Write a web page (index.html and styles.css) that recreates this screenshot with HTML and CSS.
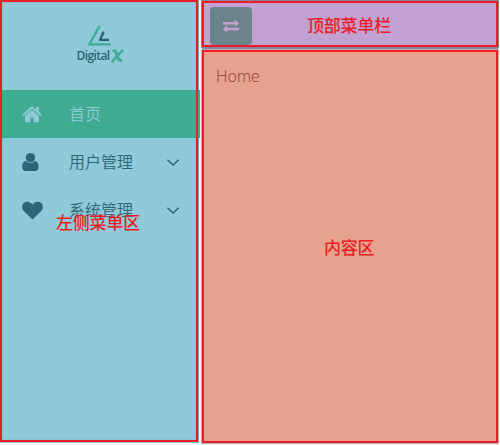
FILE: index.html
```html
<!DOCTYPE html>
<html lang="zh-CN">
<head>
<meta charset="utf-8">
<title>Digital X</title>
<link rel="stylesheet" href="styles.css">
</head>
<body>
<div class="app">
  <aside class="sidebar">
    <div class="logo">
      <svg class="mark" width="24" height="22" viewBox="0 0 24 22" fill="none" stroke-linecap="round" stroke-linejoin="round">
        <path d="M11.2 2.6 1.3 20.3H21.8" stroke="#3fac91" stroke-width="2.3"/>
        <path d="M15.3 8.5 12 15.9H20" stroke="#2b6577" stroke-width="2.4"/>
      </svg>
      <div class="wordmark"><span>Digital</span>
        <svg width="13" height="14" viewBox="0 0 13 14" fill="none" stroke="#3fac91" stroke-linecap="round" stroke-linejoin="round">
          <path d="M2.7 1.6C5 1.6 5.2 4 6 6.4S7.2 11.3 9.9 11.4" stroke-width="3"/>
          <path d="M11.5 1.4 1.2 12.6" stroke-width="2.3"/>
        </svg>
      </div>
    </div>
    <nav class="menu">
      <a class="item active">
        <svg class="icon" width="21" height="18" viewBox="0 0 21 18" fill="currentColor">
          <path d="M10 5 17 10.8V16.5Q17 17.2 16.3 17.2H11.7V12.4H8.3V17.2H3.7Q3 17.2 3 16.5V10.8Z"/>
          <path d="M.3 9.5 9 2Q10 1.2 11 2L14 4.6V2H17V7.1L19.7 9.5 18.7 10.9 10 3.7 1.3 10.9Z"/>
        </svg>
        <span>首页</span>
      </a>
      <a class="item">
        <svg class="icon" width="21" height="20" viewBox="0 0 21 20" fill="currentColor">
          <circle cx="8.4" cy="5.6" r="4.7"/>
          <path d="M4 9C1.1 9.2.3 11.8.3 15.2.3 17.7 1.7 19 3.8 19H13C15.1 19 16.5 17.7 16.5 15.2 16.5 11.8 15.7 9.2 12.8 9 10.3 11.5 6.5 11.5 4 9Z"/>
        </svg>
        <span>用户管理</span>
        <svg class="chevron" width="14" height="8" viewBox="0 0 14 8"><path d="M1.4 1.7 7 7.1 12.6 1.7"/></svg>
      </a>
      <a class="item">
        <svg class="icon" width="21" height="19" viewBox="0 0 21 19" fill="currentColor">
          <path d="M10.5 18.6 2 10.3C-1.4 6.6.3.8 5.2.8 7.8.8 9.5 2.2 10.5 3.7 11.5 2.2 13.2.8 15.8.8 20.7.8 22.4 6.6 19 10.3Z"/>
        </svg>
        <span>系统管理</span>
        <svg class="chevron" width="14" height="8" viewBox="0 0 14 8"><path d="M1.4 1.7 7 7.1 12.6 1.7"/></svg>
      </a>
    </nav>
    <div class="frame"></div>
    <strong class="note note-side">左侧菜单区</strong>
  </aside>
  <div class="main">
    <header class="topbar">
      <button class="toggle" type="button" aria-label="Toggle">
        <svg width="18" height="14" viewBox="0 0 18 14" fill="currentColor">
          <path d="M1 3H12.8V.6L17.4 4.2 12.8 7.4V5.6H1ZM17.2 8.7V11.3H5.2V13.6L.6 10 5.2 6.6V8.7Z"/>
        </svg>
      </button>
      <strong class="note note-top">顶部菜单栏</strong>
    </header>
    <main class="content">
      <p>Home</p>
      <strong class="note note-content">内容区</strong>
    </main>
  </div>
</div>
</body>
</html>
```
FILE: styles.css
```css
* { box-sizing: border-box; }
body {
  margin: 0;
  background: #f3f3f3;
  font-family: "Open Sans", "Noto Sans CJK SC", sans-serif;
}
.app {
  display: grid;
  grid-template-columns: 200px 300px;
  height: 445px;
  overflow: hidden;
}
.sidebar {
  position: relative;
  height: 443px;
  background: linear-gradient(to right, #90c9d8 198px, #7f9eaa 198px, #7f9eaa 199px, #f7fbfc 199px);
  color: #2b6577;
}
.frame {
  position: absolute;
  left: 0;
  top: 0;
  width: 198px;
  height: 442px;
  border: 2px solid #ee1c25;
  box-shadow: inset 0 0 1px #647f8b;
}
.logo {
  height: 90px;
  padding-top: 24px;
  display: flex;
  flex-direction: column;
  align-items: center;
}
.mark { display: block; }
.wordmark {
  display: flex;
  height: 20px;
  align-items: center;
  gap: 1px;
  font: 600 12px/20px "Open Sans", sans-serif;
  letter-spacing: -0.6px;
}
.wordmark span {
  width: 33px;
  white-space: nowrap;
}
.item {
  display: flex;
  align-items: center;
  height: 48px;
  padding: 0 20px 0 22px;
  font-size: 16px;
  font-weight: 350;
}
.item span {
  margin-left: 26px;
  line-height: 24px;
}
.item.active {
  background: #3fac91;
  color: #90c9d8;
}
.chevron {
  margin-left: auto;
  fill: none;
  stroke: currentColor;
  stroke-width: 1.4;
}
.main {
  display: flex;
  flex-direction: column;
  padding: 0 0 2px 1px;
}
.topbar {
  position: relative;
  height: 46px;
  margin: 1px 2px 0 1px;
  padding: 4px 6px;
  border: 2px solid #ee1c25;
  background: #c0a1d2;
  box-shadow: 0 0 0 1px #85839f, 0 2px 0 #85839f;
}
.toggle {
  display: flex;
  align-items: center;
  justify-content: center;
  width: 42px;
  height: 38px;
  padding: 0;
  border: 0;
  border-radius: 4px;
  background: #6b838a;
  color: #c0a1d2;
}
.content {
  position: relative;
  flex: 1;
  margin: 3px 2px 0 1px;
  border: 2px solid #ee1c25;
  background: #e8a390;
  box-shadow: 0 0 0 1px #b9b5b7;
  color: #883e2d;
}
.content p {
  margin: 12px 0 0 12px;
  font-size: 16px;
  line-height: 24px;
  font-weight: 340;
}
.note {
  position: absolute;
  color: #ee1c25;
  font: 500 17px/20px "Noto Sans CJK SC", sans-serif;
  letter-spacing: -0.2px;
  white-space: nowrap;
}
.note-side { left: 56px; top: 212px; }
.note-top { left: 103px; top: 12px; }
.note-content { left: 120px; top: 185px; }
```
